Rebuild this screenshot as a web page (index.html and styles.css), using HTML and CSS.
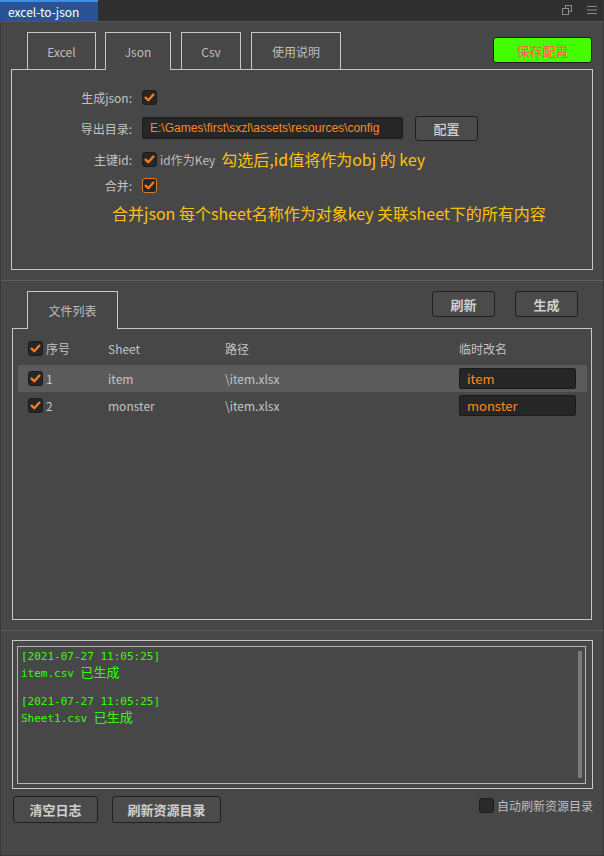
FILE: index.html
```html
<!DOCTYPE html>
<html lang="zh-CN">
<head>
<meta charset="utf-8">
<title>excel-to-json</title>
<link rel="stylesheet" href="styles.css">
</head>
<body>
<div class="window">
  <div class="titlebar">
    <div class="title-tab">excel-to-json</div>
    <div class="title-icons">
      <svg class="ico" width="11" height="10" viewBox="0 0 11 10"><rect x="3.5" y="0.5" width="6" height="6" fill="none" stroke="#8a8a8a"/><rect x="0.5" y="3.5" width="6" height="6" fill="#2f2f2f" stroke="#8a8a8a"/></svg>
      <svg class="ico" width="10" height="8" viewBox="0 0 10 8"><path d="M0 0.5H10M0 4H10M0 7.5H10" stroke="#8a8a8a" stroke-width="1"/></svg>
    </div>
  </div>

  <section class="section config">
    <div class="tabs-row">
      <div class="tabs">
        <div class="tab t-excel">Excel</div>
        <div class="tab t-json active">Json</div>
        <div class="tab t-csv">Csv</div>
        <div class="tab t-help">使用说明</div>
      </div>
      <button class="save-btn">保存配置</button>
    </div>
    <div class="panel config-panel">
      <div class="form-row r1">
        <span class="lbl">生成json:</span>
        <span class="cb"><svg viewBox="0 0 15 15"><path d="M3.6 7.6 6.3 10.3 11.4 4.6" fill="none" stroke="#ff7d1e" stroke-width="2.3" stroke-linecap="round" stroke-linejoin="round"/></svg></span>
      </div>
      <div class="form-row r2">
        <span class="lbl">导出目录:</span>
        <div class="path-input">E:\Games\first\sxzl\assets\resources\config</div>
        <button class="btn cfg-btn">配置</button>
      </div>
      <div class="form-row r3">
        <span class="lbl">主键id:</span>
        <span class="cb"><svg viewBox="0 0 15 15"><path d="M3.6 7.6 6.3 10.3 11.4 4.6" fill="none" stroke="#ff7d1e" stroke-width="2.3" stroke-linecap="round" stroke-linejoin="round"/></svg></span>
        <span class="cb-text">id作为Key</span>
        <span class="note">勾选后,id值将作为obj 的 key</span>
      </div>
      <div class="form-row r4">
        <span class="lbl">合并:</span>
        <span class="cb focus"><svg viewBox="0 0 15 15"><path d="M3.6 7.6 6.3 10.3 11.4 4.6" fill="none" stroke="#ff7d1e" stroke-width="2.3" stroke-linecap="round" stroke-linejoin="round"/></svg></span>
      </div>
      <div class="note note-long">合并json 每个sheet名称作为对象key 关联sheet下的所有内容</div>
    </div>
  </section>

  <section class="section files">
    <div class="tabs-row files-head">
      <div class="tabs">
        <div class="tab t-files active">文件列表</div>
      </div>
      <div class="head-btns">
        <button class="btn small-btn">刷新</button>
        <button class="btn small-btn">生成</button>
      </div>
    </div>
    <div class="panel files-panel">
      <div class="list-row header">
        <div class="c1"><span class="cb"><svg viewBox="0 0 15 15"><path d="M3.6 7.6 6.3 10.3 11.4 4.6" fill="none" stroke="#ff7d1e" stroke-width="2.3" stroke-linecap="round" stroke-linejoin="round"/></svg></span><span>序号</span></div>
        <div>Sheet</div>
        <div>路径</div>
        <div>临时改名</div>
      </div>
      <div class="list-row item selected">
        <div class="c1"><span class="cb"><svg viewBox="0 0 15 15"><path d="M3.6 7.6 6.3 10.3 11.4 4.6" fill="none" stroke="#ff7d1e" stroke-width="2.3" stroke-linecap="round" stroke-linejoin="round"/></svg></span><span>1</span></div>
        <div>item</div>
        <div>\item.xlsx</div>
        <div><div class="name-input">item</div></div>
      </div>
      <div class="list-row item">
        <div class="c1"><span class="cb"><svg viewBox="0 0 15 15"><path d="M3.6 7.6 6.3 10.3 11.4 4.6" fill="none" stroke="#ff7d1e" stroke-width="2.3" stroke-linecap="round" stroke-linejoin="round"/></svg></span><span>2</span></div>
        <div>monster</div>
        <div>\item.xlsx</div>
        <div><div class="name-input">monster</div></div>
      </div>
    </div>
  </section>

  <section class="section log">
    <div class="log-outer">
      <div class="log-inner">
        <div class="log-text">
          <div class="ln">[2021-07-27 11:05:25]</div>
          <div class="ln">item.csv <span class="cjk">已生成</span></div>
          <div class="ln">&nbsp;</div>
          <div class="ln">[2021-07-27 11:05:25]</div>
          <div class="ln">Sheet1.csv <span class="cjk">已生成</span></div>
        </div>
        <div class="scrollbar"></div>
      </div>
    </div>
    <div class="log-actions">
      <button class="btn act-btn clear-btn">清空日志</button>
      <button class="btn act-btn refresh-btn">刷新资源目录</button>
      <label class="auto">
        <span class="cb"></span>
        <span>自动刷新资源目录</span>
      </label>
    </div>
  </section>
</div>
</body>
</html>
```

FILE: styles.css
```css
* { box-sizing: border-box; }

html, body {
  margin: 0;
  padding: 0;
  background: #474747;
}

body {
  font-family: "Noto Sans CJK SC", "Noto Sans", sans-serif;
  font-size: 12px;
  color: #c3c3c3;
}

.window {
  width: 604px;
  height: 856px;
  background: #474747;
  border-left: 1px solid #383838;
  border-right: 1px solid #383838;
  border-bottom: 1px solid #383838;
  display: flex;
  flex-direction: column;
}

/* title bar */
.titlebar {
  height: 22px;
  background: #2f2f2f;
  border-bottom: 1px solid #555;
  display: flex;
  align-items: stretch;
  justify-content: space-between;
  margin-left: -1px;
}

.title-tab {
  width: 98px;
  background: #2b5392;
  border-top: 2px solid #3e8ee6;
  color: #ffffff;
  font-size: 12px;
  line-height: 19px;
  padding-left: 8px;
}

.title-icons {
  display: flex;
  align-items: center;
  gap: 14px;
  padding-right: 6px;
  padding-bottom: 2px;
}

/* sections */
.section {
  display: flex;
  flex-direction: column;
}

.config {
  padding: 10px 10px 10px 10px;
  border-bottom: 1px solid #5c5c5c;
}

.tabs-row {
  display: flex;
  align-items: flex-end;
  justify-content: space-between;
}

.tabs {
  display: flex;
  gap: 10px;
  margin-left: 16px;
}

.tab {
  height: 37px;
  border: 1px solid #c6c6c6;
  border-bottom: none;
  display: flex;
  align-items: center;
  justify-content: center;
  font-size: 12px;
  color: #bdbdbd;
  background: #474747;
}

.tab.active {
  position: relative;
  z-index: 1;
  height: 38px;
  margin-bottom: -1px;
}

.t-excel { width: 69px; margin-right: -1px; }
.t-json { width: 66px; }
.t-csv { width: 60px; }
.t-help { width: 90px; }
.t-files { width: 91px; }

.save-btn {
  align-self: flex-start;
  margin-top: 5px;
  margin-right: 1px;
  width: 99px;
  height: 26px;
  background: #44ff00;
  border: 1px solid #1e1e1e;
  border-radius: 3px;
  color: #ff6a4a;
  font-family: "Noto Sans CJK SC", sans-serif;
  font-size: 13px;
  font-weight: 500;
  padding: 0;
}

.panel {
  border: 1px solid #c6c6c6;
}

.config-panel {
  height: 201px;
  padding-top: 16px;
  display: flex;
  flex-direction: column;
}

.form-row {
  display: flex;
  align-items: center;
  height: 22px;
}

.form-row.r2 { height: 24px; margin-top: 8px; }
.form-row.r3 { margin-top: 8px; }
.form-row.r4 { margin-top: 4px; }

.lbl {
  width: 120px;
  text-align: right;
  margin-right: 10px;
  color: #c3c3c3;
  font-size: 12px;
}

.cb {
  width: 15px;
  height: 15px;
  flex: none;
  background: #262626;
  border: 1px solid #1b1b1b;
  border-radius: 3px;
  display: inline-flex;
  align-items: center;
  justify-content: center;
}

.cb svg {
  width: 15px;
  height: 15px;
  display: block;
  margin: -1px;
}

.cb.focus {
  border-color: #d87a2a;
}

.path-input {
  width: 261px;
  height: 22px;
  background: #262626;
  border: 1px solid #1d1d1d;
  border-radius: 2px;
  color: #ff8a1c;
  font-family: "Liberation Sans", "Noto Sans CJK SC", sans-serif;
  font-size: 12px;
  line-height: 20px;
  padding-left: 7px;
  white-space: nowrap;
}

.btn {
  background: #4b4b4b;
  border: 1px solid #1f1f1f;
  border-radius: 3px;
  color: #cfcfcf;
  font-family: "Noto Sans CJK SC", sans-serif;
  font-size: 13px;
  font-weight: 700;
  padding: 0;
}

.cfg-btn {
  width: 63px;
  height: 25px;
  margin-left: 12px;
  font-weight: 500;
}

.cb-text {
  margin-left: 3px;
  color: #bdbdbd;
  font-size: 12px;
}

.note {
  color: #ffc107;
  font-size: 16px;
  line-height: 22px;
}

.form-row .note {
  margin-left: 6px;
}

.note-long {
  margin-top: 6px;
  padding-left: 100px;
  white-space: nowrap;
}

/* file list */
.files {
  padding: 10px 11px 10px 11px;
  border-bottom: 1px solid #5c5c5c;
}

.files .tabs {
  margin-left: 15px;
}

.head-btns {
  align-self: flex-start;
  display: flex;
  gap: 20px;
  margin-right: 14px;
}

.small-btn {
  width: 63px;
  height: 26px;
}

.files-panel {
  height: 292px;
  padding: 6px 4px 0 5px;
}

.list-row {
  display: grid;
  grid-template-columns: 80px 117px 234px 117px;
  align-items: center;
  padding-left: 10px;
  height: 27px;
  color: #c3c3c3;
  font-size: 12px;
}

.list-row.header {
  height: 26px;
  margin-bottom: 4px;
  font-size: 12px;
}

.list-row.selected {
  background: #5b5b5b;
}

.c1 {
  display: flex;
  align-items: center;
  gap: 3px;
}

.c1 span:last-child {
  font-size: 12px;
}

.name-input {
  width: 117px;
  height: 21px;
  background: #262626;
  border: 1px solid #1b1b1b;
  border-radius: 2px;
  color: #ff8a1c;
  font-size: 13px;
  line-height: 19px;
  padding-left: 7px;
}

/* log */
.log {
  padding: 9px 10px 0 11px;
  flex: 1;
}

.log-outer {
  height: 149px;
  border: 1px solid #c6c6c6;
  padding: 5px 6px 4px 4px;
  display: flex;
}

.log-inner {
  flex: 1;
  border: 1px solid #b4b4b4;
  display: flex;
}

.log-text {
  flex: 1;
  padding: 2px 0 0 3px;
  color: #33ff00;
  font-family: "DejaVu Sans Mono", "Noto Sans CJK SC", monospace;
  font-size: 11px;
}

.ln {
  height: 15px;
  line-height: 15px;
  white-space: nowrap;
}

.ln .cjk {
  font-family: "Noto Sans CJK SC", sans-serif;
  font-size: 13px;
}

.scrollbar {
  width: 4px;
  margin: 4px 3px 5px 0;
  background: #7b7b7b;
}

.log-actions {
  display: flex;
  align-items: flex-start;
  margin-top: 7px;
}

.act-btn {
  height: 27px;
}

.clear-btn {
  width: 85px;
  margin-left: 1px;
}

.refresh-btn {
  width: 109px;
  margin-left: 14px;
}

.auto {
  margin-left: auto;
  display: flex;
  align-items: center;
  gap: 3px;
  color: #bdbdbd;
  font-size: 12px;
  margin-top: 1px;
}

.auto .cb {
  background: #2a2a2a;
  border-color: #1d1d1d;
}
```
